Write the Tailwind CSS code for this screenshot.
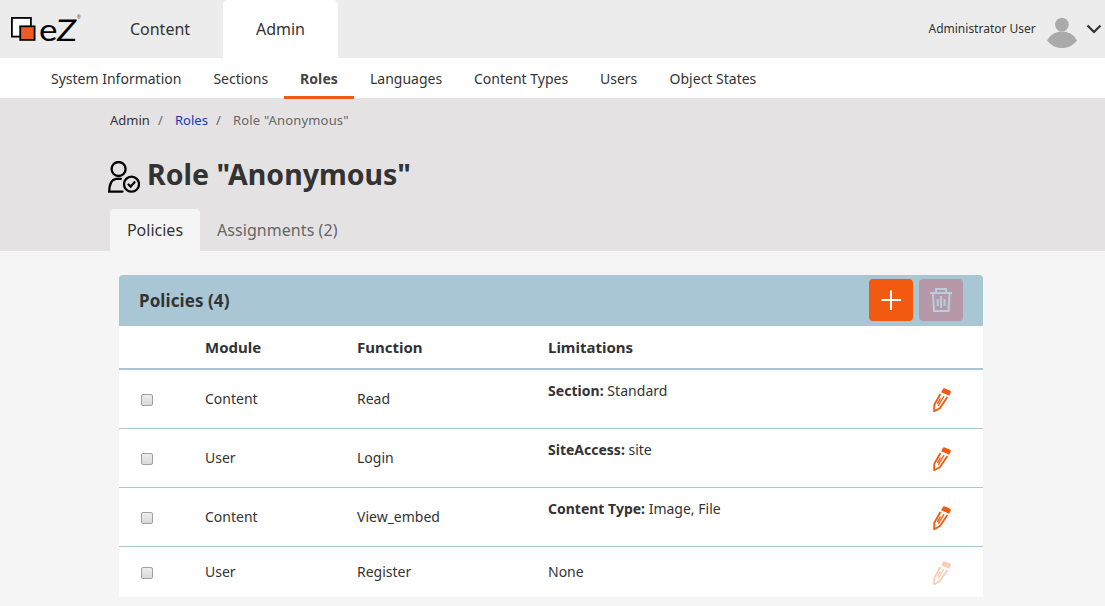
<!DOCTYPE html>
<html lang="en">
<head>
<meta charset="utf-8">
<title>Role "Anonymous"</title>
<script src="https://cdn.jsdelivr.net/npm/@tailwindcss/browser@4"></script>
</head>
<body class="w-[1105px] h-[606px] overflow-hidden bg-[#f5f5f5] text-[#333] font-['Noto_Sans',sans-serif] text-sm">
<svg class="hidden">
  <symbol id="pencil" viewBox="0 0 20 26">
    <path d="M10.7 1.2 Q11.4-.2 12.8.4 L17.9 2.6 Q19.2 3.3 18.6 4.7 L17.2 7.8 L9.1 4.2Z" fill="#f15a10"/>
    <path d="M8.5 6 L2.3 16.8 L2.1 23.2 L7.8 20.2 L15.4 9" fill="none" stroke="#f15a10" stroke-width="1.8" stroke-linejoin="round"/>
    <path d="M12 8 L6.2 17.8 M8.5 10.5 L5.4 15.8" fill="none" stroke="#f15a10" stroke-width="1.3"/>
  </symbol>
</svg>
<header class="h-[58px] bg-[#ececec] flex text-base leading-[58px] whitespace-nowrap">
  <div class="w-[97px] shrink-0">
    <svg class="block" width="90" height="58" viewBox="0 0 90 58">
      <rect x="11.9" y="17.9" width="19" height="18.7" fill="#fff" stroke="#000" stroke-width="1.8"/>
      <rect x="20.2" y="26.3" width="14.4" height="13.6" fill="#f15a22" stroke="#000" stroke-width="1.8"/>
      <text x="39" y="40.8" font-family="Lato" font-size="31" textLength="18.5" lengthAdjust="spacingAndGlyphs">e</text>
      <text transform="translate(55.8 40.8) skewX(-4)" font-family="Lato" font-size="30" textLength="20.5" lengthAdjust="spacingAndGlyphs">Z</text>
      <text x="76.8" y="19" font-family="Noto Sans" font-size="5" fill="#555">®</text>
    </svg>
  </div>
  <div class="w-[126px] text-center">Content</div>
  <div class="w-[115px] text-center bg-white rounded-t-[5px]">Admin</div>
  <div class="ml-auto flex items-start pr-1">
    <span class="text-xs leading-[58px] w-[118.5px]">Administrator User</span>
    <svg width="54" height="58" viewBox="1047 0 54 58">
      <circle cx="1061.9" cy="24.6" r="6.9" fill="#aaa"/>
      <path d="M1047 40.5 C1051 34 1056 31.5 1062 31.5 S1073 34 1077 40.5 C1073 45.5 1068 48 1062 48 S1051 45.5 1047 40.5Z" fill="#aaa"/>
      <path d="M1087.5 25.5 L1094 32 L1100.5 25.5" fill="none" stroke="#333" stroke-width="2.2"/>
    </svg>
  </div>
</header>
<nav class="h-[41px] bg-white border-b border-[#e4e2e3] flex pl-[35px] leading-[41px] whitespace-nowrap">
  <a class="w-[162.4px] px-4">System Information</a>
  <a class="w-[86.6px] px-4">Sections</a>
  <a class="w-[70px] h-[41px] px-4 font-bold text-[#444] border-b-3 border-[#f15a10] tracking-[0.1px]">Roles</a>
  <a class="w-[104px] px-4">Languages</a>
  <a class="w-[126px] px-4">Content Types</a>
  <a class="w-[69.6px] px-4">Users</a>
  <a class="px-4">Object States</a>
</nav>
<section class="h-[152px] bg-[#e4e2e3] pl-[110px] whitespace-nowrap">
  <div class="flex h-[44px] leading-[42px] text-[13px]">
    <span class="w-[48px]">Admin</span><span class="w-[17px] text-[#666]">/</span>
    <a class="w-[41px] text-[#0e3faf]">Roles</a><span class="w-[17px] text-[#666]">/</span>
    <span class="text-[#666] tracking-[0.18px]">Role "Anonymous"</span>
  </div>
  <div class="flex h-[66px]">
    <svg class="-ml-[2px] mt-[18px] shrink-0" width="32" height="32" viewBox="108 161 32 32" fill="none" stroke="#000" stroke-width="2.3" stroke-linecap="round">
      <circle cx="118.6" cy="169" r="7"/>
      <path d="M121 178.8 H116 C111.5 179.5 109.3 183 109.2 191.6 H122.5"/>
      <circle cx="131.5" cy="184.2" r="7.5"/>
      <path d="M128.5 184.5 L130.7 186.5 L134.5 182.3"/>
    </svg>
    <h1 class="ml-[7px] text-[28.5px] font-bold leading-[62px]">Role "Anonymous"</h1>
  </div>
  <div class="flex h-[42px] text-base leading-[42px]">
    <div class="w-[90px] text-center bg-[#f5f5f5] rounded-t-[4px]">Policies</div>
    <div class="pl-[17px] text-[#666] tracking-[0.06px]">Assignments (2)</div>
  </div>
</section>
<main class="mt-6 ml-[119px] w-[864px] whitespace-nowrap">
  <div class="h-[51px] bg-[#a8c6d3] rounded-t-[4px] flex items-center pl-5 pr-5 pb-[2px] gap-[6px]">
    <h2 class="text-[17px] font-bold mr-auto pt-[3px] tracking-[0.08px]">Policies (4)</h2>
    <div class="w-[44px] h-[42px] rounded-[4px] bg-[#f35a11]">
      <svg width="44" height="42" stroke="#fff" stroke-width="2"><path d="M12.5 21H32M22 11.5V31"/></svg>
    </div>
    <div class="w-[44px] h-[42px] rounded-[4px] bg-[#b698a8]">
      <svg width="44" height="42" fill="none" stroke="#b7d0dc" stroke-width="2"><path d="M11 14H33M17 13V10H27V13M14 15L15 32H29.5L30.5 15M22 17V29M18.7 20V27M25.5 20V27"/></svg>
    </div>
  </div>
  <div class="grid grid-cols-[86px_152px_191px_384px_51px] h-[44px] text-[15px] leading-[43px] bg-white border-b-2 border-[#a8c6d3] font-bold">
    <span></span><span>Module</span><span>Function</span><span>Limitations</span><span></span>
  </div>
  <div class="grid grid-cols-[86px_152px_191px_384px_51px] h-[59px] leading-[58px] bg-white border-b border-[#a8c6d3]">
    <span class="pl-[22px] pt-[24px]"><i class="block size-3 rounded-[2px] border border-[#a0a0a0] bg-linear-to-b from-[#ededed] to-[#d9d9d9]"></i></span>
    <span>Content</span><span>Read</span><span class="leading-[42px] tracking-[0.04px]"><b>Section:</b> Standard</span>
    <svg class="mt-[18px]" width="20" height="26"><use href="#pencil"/></svg>
  </div>
  <div class="grid grid-cols-[86px_152px_191px_384px_51px] h-[59px] leading-[58px] bg-white border-b border-[#a8c6d3]">
    <span class="pl-[22px] pt-[24px]"><i class="block size-3 rounded-[2px] border border-[#a0a0a0] bg-linear-to-b from-[#ededed] to-[#d9d9d9]"></i></span>
    <span>User</span><span>Login</span><span class="leading-[42px]"><b>SiteAccess:</b> site</span>
    <svg class="mt-[18px]" width="20" height="26"><use href="#pencil"/></svg>
  </div>
  <div class="grid grid-cols-[86px_152px_191px_384px_51px] h-[59px] leading-[58px] bg-white border-b border-[#a8c6d3]">
    <span class="pl-[22px] pt-[24px]"><i class="block size-3 rounded-[2px] border border-[#a0a0a0] bg-linear-to-b from-[#ededed] to-[#d9d9d9]"></i></span>
    <span>Content</span><span>View_embed</span><span class="leading-[42px]"><b>Content Type:</b> Image, File</span>
    <svg class="mt-[18px]" width="20" height="26"><use href="#pencil"/></svg>
  </div>
  <div class="grid grid-cols-[86px_152px_191px_384px_51px] h-[50px] leading-[50px] bg-white">
    <span class="pl-[22px] pt-[20px]"><i class="block size-3 rounded-[2px] border border-[#a0a0a0] bg-linear-to-b from-[#ededed] to-[#d9d9d9]"></i></span>
    <span>User</span><span>Register</span><span>None</span>
    <svg class="mt-[14px] opacity-30" width="20" height="26"><use href="#pencil"/></svg>
  </div>
</main>
</body>
</html>
